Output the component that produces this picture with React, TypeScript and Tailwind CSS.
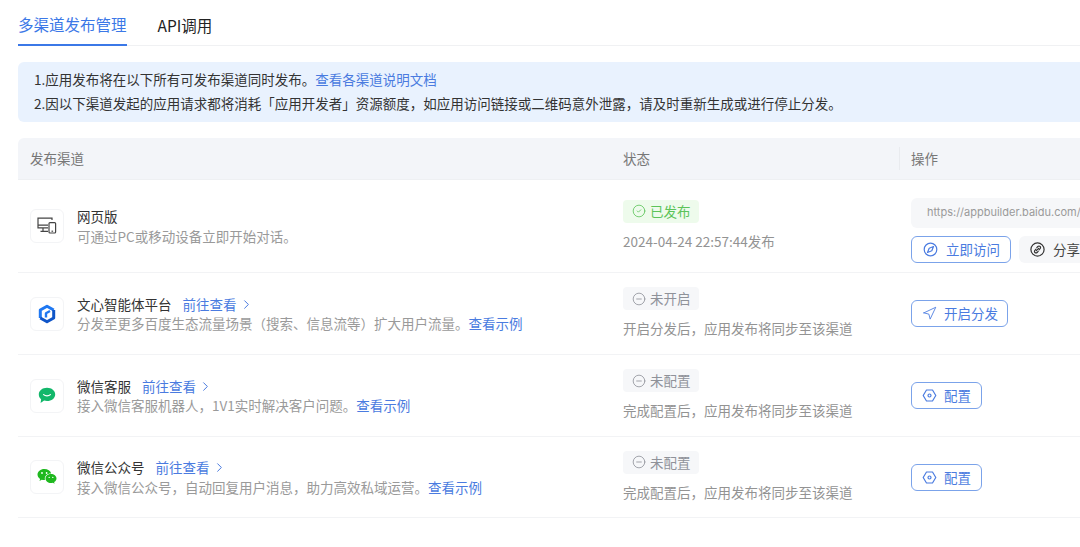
import React from "react";
import { ChevronRight, CircleCheck, CircleMinus, Navigation } from "lucide-react";

const font = "font-['Noto_Sans_CJK_SC','Noto_Sans',sans-serif]";

const DeviceIcon = () => (
  <svg width="20" height="18" viewBox="0 0 20 18" fill="none" stroke="#444" strokeWidth="1.2">
    <path d="M15 3V1.2H1v9.6h10" />
    <path d="M1 8.2h10M6 11v3M3.5 14.400H11" />
    <rect x="12" y="5.600" width="6.600" height="10.400" rx="1" />
    <path d="M14.500 14.200h1.600" />
  </svg>
);

// hexagon ring, darker on the lower left, with a small bracket inside
const AgentIcon = () => (
  <svg width="18" height="20" viewBox="0 0 18 20" fill="none" strokeWidth="3" strokeLinejoin="round">
    <path d="M2.300 14V6L9 2.200 15.700 6" stroke="#1f78f2" />
    <path d="M2.300 14 9 17.800 15.700 14V6" stroke="#0f55c8" />
    <path d="M8 13.500V9.200L12 7" stroke="#1f78f2" strokeWidth="2.400" />
  </svg>
);

const KefuIcon = () => (
  <svg width="18" height="17" viewBox="0 0 18 17">
    <path d="M9 .8c4.600 0 8.200 2.900 8.200 6.600S13.600 14 9 14c-1 0-2-.1-2.900-.4L2.600 16l.5-3.800C1.700 11 .8 9.300.8 7.400.8 3.700 4.400.8 9 .8z" fill="#12b76a" />
    <path d="M5.600 7.600c1.800 1.700 5 1.700 6.800 0" stroke="#fff" strokeWidth="1.300" fill="none" strokeLinecap="round" />
  </svg>
);

const WechatIcon = () => (
  <svg width="20" height="18" viewBox="0 0 20 18">
    <path d="M7.300 1C3.500 1 .5 3.500.5 6.600c0 1.800 1 3.300 2.600 4.400l-.6 1.900 2.200-1.200c.8.200 1.600.3 2.600.3h.7c-.2-.5-.2-1-.2-1.500 0-2.900 2.600-5.100 5.900-5.100h.5C13.500 2.800 10.700 1 7.300 1z" fill="#1fb81f" />
    <path d="M19.500 10.500c0-2.500-2.500-4.500-5.500-4.500s-5.500 2-5.500 4.500S11 15 14 15c.6 0 1.300-.1 1.900-.3l1.700 1-.5-1.600c1.500-.8 2.400-2.200 2.400-3.600z" fill="#1fb81f" />
    <circle cx="5" cy="5" r=".9" fill="#fff" />
    <circle cx="9.600" cy="5" r=".9" fill="#fff" />
    <circle cx="12.200" cy="9.400" r=".7" fill="#fff" />
    <circle cx="15.800" cy="9.400" r=".7" fill="#fff" />
  </svg>
);

const HexIcon = () => (
  <svg width="15" height="15" viewBox="0 0 15 15" fill="none" stroke="#4a7be0" strokeWidth="1.200">
    <path d="M4.500 2h6l3.300 5.500-3.300 5.500h-6L1.200 7.500z" strokeLinejoin="round" />
    <circle cx="7.500" cy="7.500" r="1.500" />
  </svg>
);

const CompassIcon = () => (
  <svg width="15" height="15" viewBox="0 0 15 15" fill="none" stroke="#4a7be0" strokeWidth="1.200">
    <circle cx="7.500" cy="7.500" r="6.300" />
    <path d="M10.500 4.500 8.800 8.800 4.500 10.500 6.200 6.200z" strokeLinejoin="round" />
  </svg>
);

const ShareIcon = () => (
  <svg width="15" height="15" viewBox="0 0 15 15" fill="none" stroke="#333" strokeWidth="1.200">
    <circle cx="7.500" cy="7.500" r="6.600" />
    <path d="M6.800 5.600 7.900 4.500a1.500 1.500 0 0 1 2.200 2.200L9 7.800" strokeLinecap="round" />
    <path d="M8.200 9.400 7.100 10.500a1.500 1.500 0 0 1-2.200-2.200L6 7.200" strokeLinecap="round" />
    <path d="M6.300 8.700 8.700 6.300" strokeLinecap="round" />
  </svg>
);

function IconBox({ children }: { children: React.ReactNode }) {
  return (
    <div className="flex h-[34px] w-[34px] shrink-0 items-center justify-center rounded-md border border-[#f3f4f6] bg-white">
      {children}
    </div>
  );
}

function StatusTag({ label, on }: { label: string; on?: boolean }) {
  return (
    <div
      className={`flex h-[23px] w-[76px] items-center gap-[4px] rounded pl-[9px] text-[13.5px] ${
        on ? "bg-[#eefbec] text-[#5cc45a]" : "bg-[#f6f7f9] text-[#8f9299]"
      }`}
    >
      {on ? <CircleCheck size={14} strokeWidth={1.4} /> : <CircleMinus size={14} strokeWidth={1.4} />}
      {label}
    </div>
  );
}

function OutlineButton({ icon, label, className }: { icon: React.ReactNode; label: string; className: string }) {
  return (
    <button className={`flex h-[27px] items-center rounded-md border border-[#7ba3ea] bg-white text-[13.5px] text-[#4a7be0] ${className}`}>
      {icon}
      {label}
    </button>
  );
}

function Channel({
  icon,
  title,
  link,
  desc,
  example,
}: {
  icon: React.ReactNode;
  title: string;
  link?: boolean;
  desc: string;
  example?: boolean;
}) {
  return (
    <div className="flex w-[593px] shrink-0 items-center gap-[13px] pl-3">
      {icon}
      <div className="flex flex-col">
        <div className="flex h-[20px] items-center text-[13.5px] text-[#333]">
          {title}
          {link && (
            <span className="ml-[11px] flex items-center text-[#4a7be0]">
              前往查看
              <ChevronRight size={15} strokeWidth={1.6} className="ml-[2px]" />
            </span>
          )}
        </div>
        <div className="flex h-[19px] items-center text-[13.5px] text-[#9a9a9a]">
          {desc}
          {example && <span className="text-[#4a7be0]">查看示例</span>}
        </div>
      </div>
    </div>
  );
}

function Row({
  channel,
  tag,
  note,
  action,
  rowClass,
}: {
  channel: React.ReactNode;
  tag: React.ReactNode;
  note: string;
  action: React.ReactNode;
  rowClass: string;
}) {
  return (
    <div className={`flex items-center border-b border-[#f2f3f5] ${rowClass}`}>
      {channel}
      <div className="mb-[2px] flex w-[288px] shrink-0 flex-col gap-[8px] pl-3">
        {tag}
        <div className="text-[13.5px] leading-[20px] text-[#939393]">{note}</div>
      </div>
      <div className="pl-3">{action}</div>
    </div>
  );
}

export default function App() {
  return (
    <div className={`h-[547px] w-[1080px] overflow-hidden bg-white ${font}`}>
      <div className="w-[1240px] pl-[18px]">
        <div className="flex h-[46px] gap-[31px] border-b border-[#f0f1f3]">
          <div className="flex h-[46px] items-center border-b-2 border-[#3b78e7] pt-[6px] text-[15.5px] text-[#3b78e7]">多渠道发布管理</div>
          <div className="flex h-[46px] items-center pt-[6px] text-[15.5px] text-[#222]">API调用</div>
        </div>

        <div className="mt-4 flex h-[60px] flex-col justify-center gap-[4px] rounded-md bg-[#e9f2fe] pb-[2px] pl-4 text-[13.5px] leading-[20px] text-[#333]">
          <div>
            1.应用发布将在以下所有可发布渠道同时发布。<span className="text-[#4a7be0]">查看各渠道说明文档</span>
          </div>
          <div>2.因以下渠道发起的应用请求都将消耗「应用开发者」资源额度，如应用访问链接或二维码意外泄露，请及时重新生成或进行停止分发。</div>
        </div>

        <div className="mt-4 flex h-[42px] items-center rounded-t-md border-b border-[#eef0f3] bg-[#f3f5f9] text-[13.5px] text-[#777]">
          <div className="w-[593px] shrink-0 pl-3">发布渠道</div>
          <div className="w-[288px] shrink-0 pl-3">状态</div>
          <div className="h-[23px] border-l border-[#e9ebef] pl-[11px] leading-[23px]">操作</div>
        </div>

        <Row
          rowClass="h-[93px]"
          channel={<Channel icon={<IconBox><DeviceIcon /></IconBox>} title="网页版" desc="可通过PC或移动设备立即开始对话。" />}
          tag={<StatusTag label="已发布" on />}
          note="2024-04-24 22:57:44发布"
          action={
            <div className="mt-2 flex flex-col gap-2">
              <div className="flex h-[30px] w-[280px] items-center rounded-md bg-[#f6f7f9] pl-[16px] font-['Inter',sans-serif] text-[11px] text-[#9a9a9a]">
                https://appbuilder.baidu.com/
              </div>
              <div className="flex gap-2">
                <OutlineButton className="w-[100px] gap-[8px] pl-[11px]" icon={<CompassIcon />} label="立即访问" />
                <button className="flex h-[27px] w-[90px] items-center gap-[8px] rounded-md bg-[#f6f7f9] pl-[11px] text-[13.5px] text-[#444]">
                  <ShareIcon />
                  分享
                </button>
              </div>
            </div>
          }
        />
        <Row
          rowClass="h-[82px]"
          channel={<Channel icon={<IconBox><AgentIcon /></IconBox>} title="文心智能体平台" link desc="分发至更多百度生态流量场景（搜索、信息流等）扩大用户流量。" example />}
          tag={<StatusTag label="未开启" />}
          note="开启分发后，应用发布将同步至该渠道"
          action={<OutlineButton className="w-[97px] gap-[7px] pl-[10px]" icon={<Navigation size={15} strokeWidth={1.4} />} label="开启分发" />}
        />
        <Row
          rowClass="h-[82px]"
          channel={<Channel icon={<IconBox><KefuIcon /></IconBox>} title="微信客服" link desc="接入微信客服机器人，1V1实时解决客户问题。" example />}
          tag={<StatusTag label="未配置" />}
          note="完成配置后，应用发布将同步至该渠道"
          action={<OutlineButton className="w-[71px] gap-[7px] pl-[10px]" icon={<HexIcon />} label="配置" />}
        />
        <Row
          rowClass="h-[81px]"
          channel={<Channel icon={<IconBox><WechatIcon /></IconBox>} title="微信公众号" link desc="接入微信公众号，自动回复用户消息，助力高效私域运营。" example />}
          tag={<StatusTag label="未配置" />}
          note="完成配置后，应用发布将同步至该渠道"
          action={<OutlineButton className="w-[71px] gap-[7px] pl-[10px]" icon={<HexIcon />} label="配置" />}
        />
      </div>
    </div>
  );
}
